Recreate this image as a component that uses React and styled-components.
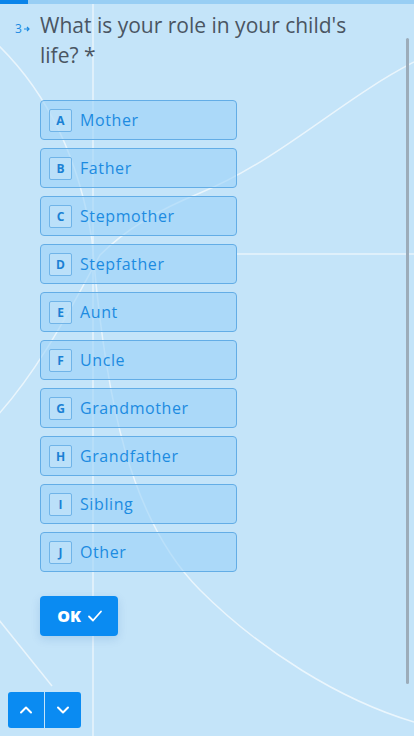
import React from "react";
import styled, { createGlobalStyle } from "styled-components";

const Global = createGlobalStyle`
  html, body { margin: 0; padding: 0; }
  body {
    background: #c4e4f9;
    font-family: "Open Sans", "Noto Sans", sans-serif;
    overflow: hidden;
  }
`;

const Page = styled.div`
  position: relative;
  width: 414px;
  height: 736px;
  background: #c4e4f9;
  overflow: hidden;
`;

const Deco = styled.svg`
  position: absolute;
  inset: 0;
  width: 414px;
  height: 736px;
  pointer-events: none;
`;

const Progress = styled.div`
  position: absolute;
  top: 0;
  left: 0;
  right: 0;
  height: 4px;
  background: #98cef4;
`;

const ProgressFill = styled.div`
  height: 100%;
  background: #0a84ea;
`;

const Content = styled.main`
  position: relative;
  display: flex;
  flex-direction: column;
  padding: 10px 0 0 40px;
`;

const Question = styled.h1`
  position: relative;
  margin: 0;
  width: 322px;
  font-weight: 400;
  font-size: 21px;
  line-height: 30px;
  color: #4a5562;
`;

const Num = styled.span`
  position: absolute;
  left: -25px;
  top: 4px;
  font-size: 12px;
  color: #1a8ae2;
  display: flex;
  align-items: center;
  gap: 1px;
`;

const Options = styled.div`
  display: flex;
  flex-direction: column;
  gap: 8px;
  margin-top: 30px;
`;

const Option = styled.div`
  box-sizing: border-box;
  width: 197px;
  height: 40px;
  display: flex;
  align-items: center;
  gap: 8px;
  padding-left: 8px;
  background: rgba(155, 210, 248, 0.6);
  border: 1px solid #63ade6;
  border-radius: 4px;
`;

const Key = styled.span`
  box-sizing: border-box;
  width: 23px;
  height: 23px;
  display: flex;
  align-items: center;
  justify-content: center;
  border: 1px solid #70b4e8;
  background: rgba(200, 230, 250, 0.55);
  border-radius: 2px;
  font-size: 12px;
  font-weight: 700;
  color: #1a80d4;
`;

const Label = styled.span`
  font-size: 16px;
  letter-spacing: 0.6px;
  color: #1c8be1;
`;

const OkButton = styled.button`
  margin-top: 24px;
  width: 78px;
  height: 40px;
  display: flex;
  align-items: center;
  justify-content: center;
  gap: 6px;
  border: none;
  border-radius: 4px;
  background: #0a8bf2;
  color: #fff;
  font-family: inherit;
  font-size: 16px;
  font-weight: 800;
  box-shadow: 0 3px 10px rgba(0, 80, 160, 0.15);
  padding: 0 0 0 2px;
`;

const Scrollbar = styled.div`
  position: absolute;
  left: 406px;
  top: 38px;
  width: 3px;
  height: 646px;
  background: #9cacba;
  border-radius: 2px;
`;

const Nav = styled.div`
  position: absolute;
  left: 8px;
  top: 692px;
  display: flex;
  gap: 1px;
  border-radius: 3px;
  overflow: hidden;
`;

const NavBtn = styled.button`
  width: 36px;
  height: 36px;
  border: none;
  padding: 0;
  background: #0a8bf2;
  display: flex;
  align-items: center;
  justify-content: center;
`;

const options = [
  ["A", "Mother"],
  ["B", "Father"],
  ["C", "Stepmother"],
  ["D", "Stepfather"],
  ["E", "Aunt"],
  ["F", "Uncle"],
  ["G", "Grandmother"],
  ["H", "Grandfather"],
  ["I", "Sibling"],
  ["J", "Other"],
];

export default function App() {
  return (
    <Page>
      <Global />
      <Deco viewBox="0 0 414 736">
        <g fill="none" stroke="#eef7fd" strokeWidth="1.5" opacity="0.9">
          <line x1="93" y1="0" x2="93" y2="736" />
          <line x1="237" y1="254" x2="414" y2="254" />
          <path d="M -5 42 Q 72 115 92 240 C 105 400 130 520 200 590 C 260 650 340 700 414 722" />
          <path d="M -5 418 C 40 370 75 300 100 255 C 130 225 170 205 200 193 C 280 160 340 100 414 62" />
          <path d="M -5 615 L 52 686" />
        </g>
      </Deco>
      <Progress>
        <ProgressFill style={{ width: "28px" }} />
      </Progress>
      <Content>
        <Question>
          <Num>
            3
            <svg width="8" height="8" viewBox="0 0 8 8">
              <path d="M1 4h5M4 2l2 2-2 2" stroke="#1a8ae2" strokeWidth="1.2" fill="none" />
            </svg>
          </Num>
          What is your role in your child's life? *
        </Question>
        <Options>
          {options.map(([k, l]) => (
            <Option key={k}>
              <Key>{k}</Key>
              <Label>{l}</Label>
            </Option>
          ))}
        </Options>
        <OkButton>
          OK
          <svg width="16" height="16" viewBox="0 0 16 16">
            <path d="M2 8.5l4 4 8-9" stroke="#fff" strokeWidth="1.8" fill="none" strokeLinecap="round" strokeLinejoin="round" />
          </svg>
        </OkButton>
      </Content>
      <Scrollbar />
      <Nav>
        <NavBtn>
          <svg width="14" height="14" viewBox="0 0 14 14">
            <path d="M2 9.5l5-5 5 5" stroke="#fff" strokeWidth="2" fill="none" strokeLinecap="round" strokeLinejoin="round" />
          </svg>
        </NavBtn>
        <NavBtn>
          <svg width="14" height="14" viewBox="0 0 14 14">
            <path d="M2 4.5l5 5 5-5" stroke="#fff" strokeWidth="2" fill="none" strokeLinecap="round" strokeLinejoin="round" />
          </svg>
        </NavBtn>
      </Nav>
    </Page>
  );
}
